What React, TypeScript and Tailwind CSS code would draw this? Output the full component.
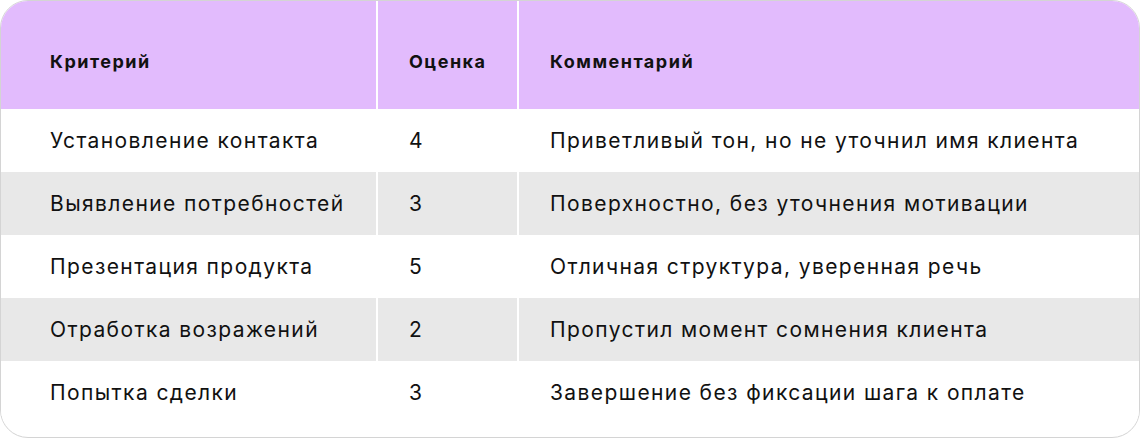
import React from "react";

const rows = [
  ["Установление контакта", "4", "Приветливый тон, но не уточнил имя клиента"],
  ["Выявление потребностей", "3", "Поверхностно, без уточнения мотивации"],
  ["Презентация продукта", "5", "Отличная структура, уверенная речь"],
  ["Отработка возражений", "2", "Пропустил момент сомнения клиента"],
  ["Попытка сделки", "3", "Завершение без фиксации шага к оплате"],
];

export default function App() {
  return (
    <div
      className="w-[1140px] h-[438px] bg-white"
      style={{ fontFamily: "Inter, 'Noto Sans', sans-serif" }}
    >
      <div className="w-full h-full rounded-[28px] border border-[#d4d4d4] overflow-hidden bg-white pb-[13px] text-[#111111]">
        <div className="grid grid-cols-[375px_139px_1fr] gap-x-[2px] h-[108px]">
          <div className="bg-[#e2bbfd] flex items-center pt-[12px] pl-[49px] text-[18px] tracking-[1.5px] font-bold">
            Критерий
          </div>
          <div className="bg-[#e2bbfd] flex items-center pt-[12px] pl-[31px] text-[18px] tracking-[1.5px] font-bold">
            Оценка
          </div>
          <div className="bg-[#e2bbfd] flex items-center pt-[12px] pl-[31px] text-[18px] tracking-[1.5px] font-bold">
            Комментарий
          </div>
        </div>
        {rows.map((r, i) => {
          const bg = i % 2 === 1 ? "bg-[#e8e8e8]" : "bg-white";
          return (
            <div key={i} className="grid grid-cols-[375px_139px_1fr] gap-x-[2px] h-[63px]">
              <div className={`${bg} flex items-center pl-[49px] text-[21px] tracking-[1.4px]`}>{r[0]}</div>
              <div className={`${bg} flex items-center pl-[31px] text-[21px] tracking-[1.4px]`}>{r[1]}</div>
              <div className={`${bg} flex items-center pl-[31px] text-[21px] tracking-[1.4px]`}>{r[2]}</div>
            </div>
          );
        })}
      </div>
    </div>
  );
}
